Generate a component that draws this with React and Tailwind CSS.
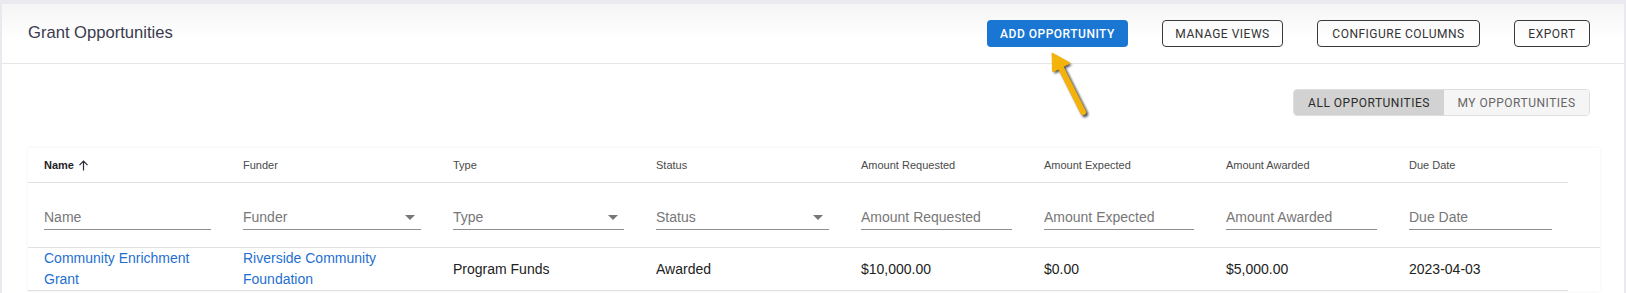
import React from "react";

const font = { fontFamily: '"Liberation Sans", Arial, sans-serif' };
const roboto = { fontFamily: 'Roboto, "Liberation Sans", sans-serif' };

const columns = [
  { key: "name", label: "Name", w: "w-[199px]", sorted: true },
  { key: "funder", label: "Funder", w: "w-[210px]", select: true },
  { key: "type", label: "Type", w: "w-[203px]", select: true },
  { key: "status", label: "Status", w: "w-[205px]", select: true },
  { key: "requested", label: "Amount Requested", w: "w-[183px]" },
  { key: "expected", label: "Amount Expected", w: "w-[182px]" },
  { key: "awarded", label: "Amount Awarded", w: "w-[183px]" },
  { key: "due", label: "Due Date", w: "w-[175px]" },
];

const rows = [
  {
    name: "Community Enrichment Grant",
    funder: "Riverside Community Foundation",
    type: "Program Funds",
    status: "Awarded",
    requested: "$10,000.00",
    expected: "$0.00",
    awarded: "$5,000.00",
    due: "2023-04-03",
  },
];

function SortArrow() {
  return (
    <svg width="11" height="11" viewBox="0 0 11 11" className="ml-[4px]">
      <path d="M5.5 10.5V1.5M1.5 5.2L5.5 1.2L9.5 5.2" fill="none" stroke="#2a2a3a" strokeWidth="1.2" />
    </svg>
  );
}

function Pointer() {
  return (
    <svg width="60" height="76" viewBox="0 0 60 76" className="absolute left-[1040px] top-[48px] pointer-events-none">
      <defs>
        <filter id="blur" x="-30%" y="-30%" width="160%" height="160%">
          <feGaussianBlur stdDeviation="1.2" />
        </filter>
      </defs>
      <g transform="translate(2 2)" filter="url(#blur)" opacity="0.75">
        <path d="M12 5L12.5 24L30 15Z" fill="#222" />
        <path d="M20 18L43 64" stroke="#222" strokeWidth="6.5" strokeLinecap="round" />
      </g>
      <path d="M12 5L12.5 24L30 15Z" fill="#f4b30a" stroke="#f4b30a" strokeWidth="1" strokeLinejoin="round" />
      <path d="M20 18L43 64" stroke="#f4b30a" strokeWidth="6" strokeLinecap="round" />
    </svg>
  );
}

export default function App() {
  return (
    <div className="relative h-[293px] w-[1626px] overflow-hidden bg-[#e9e9ef] px-[2px] pt-[4px]" style={font}>
      <div className="h-full rounded-tl-[4px] bg-white">
        <div className="flex h-[60px] items-center justify-between border-b border-[#e6e6e6] bg-gradient-to-b from-[#f5f5f5] to-white to-60% pl-[26px] pr-[34px]">
          <h1 className="text-[16.6px] text-[#3a3a4c]">Grant Opportunities</h1>
          <div className="flex items-center gap-[34px]" style={roboto}>
            <button className="flex h-[27px] w-[141px] items-center justify-center rounded-[4px] bg-[#1976d2] text-[12px] font-medium tracking-[0.5px] text-white">
              ADD OPPORTUNITY
            </button>
            <button className="flex h-[27px] w-[121px] items-center justify-center rounded-[4px] border border-[#3a3a3a] text-[12px] tracking-[0.5px] text-[#333]">
              MANAGE VIEWS
            </button>
            <button className="flex h-[27px] w-[163px] items-center justify-center rounded-[4px] border border-[#3a3a3a] text-[12px] tracking-[0.5px] text-[#333]">
              CONFIGURE COLUMNS
            </button>
            <button className="flex h-[27px] w-[76px] items-center justify-center rounded-[4px] border border-[#3a3a3a] text-[12px] tracking-[0.5px] text-[#333]">
              EXPORT
            </button>
          </div>
        </div>

        <div className="mt-[25px] flex justify-end pr-[34px]" style={roboto}>
          <div className="flex h-[27px] overflow-hidden rounded-[4px] border border-[#dedede] text-[12px] tracking-[0.5px]">
            <button className="w-[150px] bg-[#d2d2d2] text-[#2b2b2b]">ALL OPPORTUNITIES</button>
            <button className="w-[145px] bg-[#f5f5f5] text-[#666]">MY OPPORTUNITIES</button>
          </div>
        </div>

        <div className="ml-[26px] mt-[32px] w-[1572px] shadow-[0_0_3px_rgba(0,0,0,0.07)]">
          <div className="flex h-[35px] w-[1540px] items-center border-b border-[#e0e0e0]">
            {columns.map((c) => (
              <div key={c.key} className={`${c.w} flex items-center px-4 text-[11px] ${c.sorted ? "font-bold text-[#1f1f2a]" : "text-[#4a4a4a]"}`}>
                {c.label}
                {c.sorted && <SortArrow />}
              </div>
            ))}
          </div>

          <div className="border-b border-[#e0e0e0]">
            <div className="flex w-[1540px] pb-[17px] pt-[22px]">
              {columns.map((c) => (
                <div key={c.key} className={`${c.w} px-4`}>
                  <div className="relative flex h-[25px] items-center border-b border-[#8d8d8d] text-[14px] text-[#777]">
                    {c.label}
                    {c.select && (
                      <svg width="10" height="5" viewBox="0 0 10 5" className="absolute right-[6px] top-[10px]">
                        <path d="M0 0H10L5 5Z" fill="#777" />
                      </svg>
                    )}
                  </div>
                </div>
              ))}
            </div>
          </div>

          {rows.map((r, i) => (
            <div key={i} className="flex h-[43px] w-[1540px] items-center border-b border-[#e0e0e0] text-[14px] leading-[21px] text-[#222]">
              <div className="w-[199px] px-4 text-[#1f6fd0]">{r.name}</div>
              <div className="w-[210px] px-4 text-[#1f6fd0]">{r.funder}</div>
              <div className="w-[203px] px-4">{r.type}</div>
              <div className="w-[205px] px-4">{r.status}</div>
              <div className="w-[183px] px-4">{r.requested}</div>
              <div className="w-[182px] px-4">{r.expected}</div>
              <div className="w-[183px] px-4">{r.awarded}</div>
              <div className="w-[175px] px-4">{r.due}</div>
            </div>
          ))}
        </div>
      </div>
      <Pointer />
    </div>
  );
}
